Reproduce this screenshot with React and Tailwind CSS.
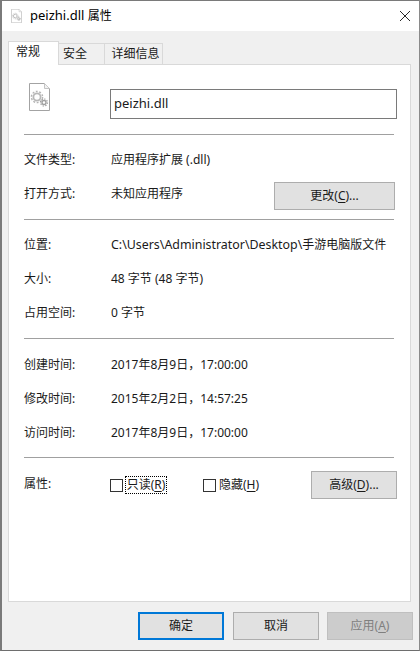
const fontStack = { fontFamily: '"Noto Sans", "Noto Sans CJK SC", sans-serif' };

function FileIcon({ className }) {
  return (
    <svg viewBox="0 0 21 28" className={className} fill="none">
      <path d="M.5.5h15l5 5v22H.5z" fill="#fff" stroke="#a3a3a3" />
      <path d="M15.5.5v5h5" fill="#f2f2f2" stroke="#c4c4c4" />
      <circle cx="8" cy="14" r="3.6" stroke="#b8b8b8" strokeWidth="1.8" />
      <circle cx="8" cy="14" r="5.6" stroke="#b4b4b4" strokeWidth="1.4" strokeDasharray="1.9 1.6" />
      <circle cx="15" cy="19.5" r="2" stroke="#a0a0a0" strokeWidth="1.4" />
      <circle cx="15" cy="19.5" r="3.5" stroke="#a0a0a0" strokeWidth="1.2" strokeDasharray="1.4 1.3" />
    </svg>
  );
}

function Row({ label, children }) {
  return (
    <div className="flex h-[34px] items-center pt-[2px]">
      <span className="w-[87px] shrink-0">{label}</span>
      <span className="whitespace-nowrap">{children}</span>
    </div>
  );
}

function Sep() {
  return <div className="h-px w-[370px] bg-[#a0a0a0]" />;
}

function Key({ children }) {
  return <span className="underline underline-offset-2">{children}</span>;
}

function Btn({ className, children }) {
  return (
    <button className={`flex shrink-0 items-center justify-center bg-[#e1e1e1] text-[12px] ${className}`}>
      {children}
    </button>
  );
}

export default function App() {
  return (
    <div
      style={fontStack}
      className="flex h-[651px] w-[420px] flex-col overflow-hidden border-t border-b border-l-2 border-r border-t-[#7a7a7a] border-b-[#6e6e6e] border-l-[#7a7a7a] border-r-[#8a8a8a] bg-[#f0f0f0] text-[12px] text-[#1a1a1a]"
    >
      <div className="flex h-[30px] shrink-0 items-center bg-white pl-[9px] pr-[9px]">
        <FileIcon className="h-[14px] w-[11px]" />
        <span className="ml-[8px] text-[13px] text-black">
          peizhi.dll <span className="text-[12px]">属性</span>
        </span>
        <svg viewBox="0 0 10 10" className="ml-auto h-[10px] w-[10px]" stroke="#111" strokeWidth="0.9">
          <path d="M0 0l10 10M10 0L0 10" />
        </svg>
      </div>

      <div className="flex min-h-0 flex-1 flex-col pl-[6px] pr-[8px] pt-[10px]">
        <div className="relative z-10 -mb-px flex h-[24px] items-end">
          <div className="flex h-[24px] w-[51px] items-center justify-center border border-b-0 border-[#d9d9d9] bg-white pb-[3px] pr-[11px]">常规</div>
          <div className="flex h-[22px] w-[46px] items-center justify-center border border-l-0 border-[#d9d9d9] bg-[#f0f0f0] pr-[13px]">安全</div>
          <div className="flex h-[22px] w-[58px] items-center justify-center border border-l-0 border-[#d9d9d9] bg-[#f0f0f0] pl-[4px]">详细信息</div>
        </div>

        <div className="h-[538px] border border-[#d9d9d9] bg-white pl-[15px] pt-[24px]">
          <div className="flex h-[30px] items-start">
            <FileIcon className="ml-[5px] mt-[-6px] h-[28px] w-[21px]" />
            <div className="ml-[60px] flex h-[30px] w-[287px] items-center border border-[#7a7a7a] pl-[3px] text-[13px]">peizhi.dll</div>
          </div>
          <div className="h-[15px]" />
          <Sep />

          <div className="pb-[9px] pt-[7px]">
            <Row label="文件类型:">应用程序扩展 (.dll)</Row>
            <div className="flex h-[34px] items-start">
              <span className="mt-[9px] w-[87px] shrink-0">打开方式:</span>
              <span className="mt-[9px] whitespace-nowrap">未知应用程序</span>
              <Btn className="ml-auto mr-[15px] mt-[6px] h-[28px] w-[121px] border border-[#adadad]">
                <span>更改(<Key>C</Key>)...</span>
              </Btn>
            </div>
          </div>
          <Sep />

          <div className="pb-[9px] pt-[7px]">
            <Row label="位置:">
              <span className="text-[12.4px]">C:\Users\Administrator\Desktop\</span>手游电脑版文件
            </Row>
            <Row label="大小:">48 字节 (48 字节)</Row>
            <Row label="占用空间:">0 字节</Row>
          </div>
          <Sep />

          <div className="pb-[8px] pt-[8px]">
            <Row label="创建时间:">2017年8月9日，17:00:00</Row>
            <Row label="修改时间:">2015年2月2日，14:57:25</Row>
            <Row label="访问时间:">2017年8月9日，17:00:00</Row>
          </div>
          <Sep />

          <div className="mt-[13px] flex h-[28px] items-center">
            <span className="mb-[3px] w-[86px] shrink-0">属性:</span>
            <span className="h-[13px] w-[13px] shrink-0 border border-[#333] bg-white" />
            <span className="ml-[2px] flex h-[18px] w-[42px] items-center justify-center whitespace-nowrap border border-dotted border-black">
              只读(<Key>R</Key>)
            </span>
            <span className="ml-[36px] h-[13px] w-[13px] shrink-0 border border-[#333] bg-white" />
            <span className="ml-[3px] whitespace-nowrap">隐藏(<Key>H</Key>)</span>
            <Btn className="ml-auto mr-[13px] h-[28px] w-[86px] border border-[#adadad]">
              <span>高级(<Key>D</Key>)...</span>
            </Btn>
          </div>
        </div>

        <div className="flex items-start pl-[130px] pt-[10px]">
          <Btn className="h-[28px] w-[86px] border-2 border-[#0078d7]">确定</Btn>
          <Btn className="ml-[9px] h-[28px] w-[86px] border border-[#adadad]">取消</Btn>
          <Btn className="ml-[8px] h-[28px] w-[86px] border border-[#bfbfbf] !bg-[#cccccc] text-[#7f7f7f]">
            <span>应用(<Key>A</Key>)</span>
          </Btn>
        </div>
      </div>
    </div>
  );
}
